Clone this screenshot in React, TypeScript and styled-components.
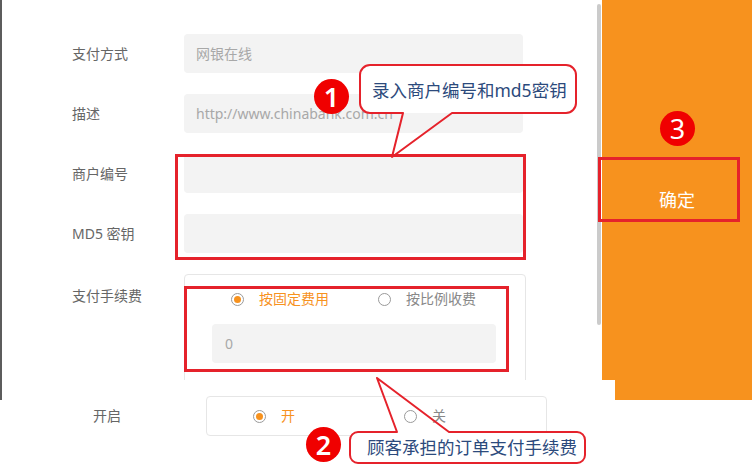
import React from 'react';
import styled, { createGlobalStyle } from 'styled-components';

const colors = {
  orange: '#f7921e',
  red: '#e5222b',
  badge: '#f00000',
  edge: '#5c5c5c',
  label: '#666666',
  placeholder: '#a8a8a8',
  field: '#f3f3f3',
  line: '#e6e6e6',
  radio: '#9a9a9a',
  note: '#2c4a7c',
};

const GlobalStyle = createGlobalStyle`
  html, body { margin: 0; padding: 0; background: #ffffff; }
  body { font-family: "Noto Sans", "Noto Sans CJK SC", sans-serif; }
  * { box-sizing: border-box; }
`;

const Page = styled.div`
  position: relative;
  width: 752px;
  height: 474px;
  overflow: hidden;
  background: #ffffff;
`;

/* ---------- top capture: form + orange side ---------- */
const TopSection = styled.div`
  display: flex;
  height: 380px;
  overflow: hidden;
`;
const FormPanel = styled.div`
  width: 597px;
  border-left: 2px solid ${ colors.edge };
  padding: 34px 0 0 70px;
  display: grid;
  grid-template-columns: 112px 342px;
  grid-auto-rows: min-content;
  row-gap: 21px;
  align-items: center;
`;
const Label = styled.div<{ $top?: boolean }>`
  font-size: 14px;
  line-height: 20px;
  color: ${ colors.label };
  ${ ( p ) => p.$top && 'align-self: start; margin-top: 12px;' }
`;
const Field = styled.div<{ $width?: number }>`
  width: ${ ( p ) => p.$width ?? 339 }px;
  height: 39px;
  padding: 0 12px;
  border-radius: 4px;
  background: ${ colors.field };
  font-size: 14px;
  line-height: 39px;
  color: ${ colors.placeholder };
  white-space: nowrap;
  overflow: hidden;
`;
const FeeBox = styled.div`
  width: 342px;
  height: 130px;
  align-self: start;
  border: 1px solid ${ colors.line };
  border-radius: 4px;
  padding-top: 14px;
`;
const RadioRow = styled.div<{ $indent: number }>`
  display: flex;
  align-items: center;
  height: 20px;
  padding-left: ${ ( p ) => p.$indent }px;
`;
const Option = styled.label`
  display: flex;
  align-items: center;
  gap: 15px;
  width: 151px;
`;
const Radio = styled.span<{ $checked?: boolean }>`
  position: relative;
  width: 13px;
  height: 13px;
  flex: none;
  border: 1px solid ${ colors.radio };
  border-radius: 50%;
  background: #fff;
  &::after {
    content: '';
    display: ${ ( p ) => ( p.$checked ? 'block' : 'none' ) };
    position: absolute;
    left: 2px;
    top: 2px;
    width: 7px;
    height: 7px;
    border-radius: 50%;
    background: ${ colors.orange };
  }
`;
const OptionText = styled.span<{ $checked?: boolean }>`
  font-size: 14px;
  line-height: 20px;
  color: ${ ( p ) => ( p.$checked ? colors.orange : '#888888' ) };
`;
const FeeField = styled( Field )`
  margin: 15px 0 0 27px;
  padding-left: 13px;
`;
const ScrollTrack = styled.div`
  width: 5px;
  padding-top: 4px;
`;
const ScrollThumb = styled.div`
  width: 4px;
  height: 321px;
  border-radius: 2px;
  background: #cbcbcb;
`;
const OrangePanel = styled.div`
  flex: 1;
  background: ${ colors.orange };
  display: flex;
  justify-content: center;
`;
const ConfirmButton = styled.button`
  margin-top: 188px;
  height: 24px;
  padding: 0;
  border: none;
  background: transparent;
  color: #ffffff;
  font-family: inherit;
  font-size: 18px;
  line-height: 24px;
`;

/* ---------- bottom capture: 开启 row ---------- */
const BottomSection = styled.div`
  display: flex;
  height: 94px;
`;
const EdgeStub = styled.div`
  width: 2px;
  height: 20px;
  background: ${ colors.edge };
`;
const SwitchArea = styled.div`
  flex: 1;
  display: flex;
  align-items: center;
  align-self: flex-start;
  padding: 16px 0 0 91px;
`;
const SwitchLabel = styled( Label )`
  width: 113px;
`;
const SwitchBox = styled.div`
  width: 341px;
  height: 40px;
  border: 1px solid ${ colors.line };
  border-radius: 4px;
  display: flex;
  align-items: center;
`;
const OrangeStub = styled.div`
  width: 137px;
  height: 20px;
  background: ${ colors.orange };
`;

/* ---------- annotations laid over the captures ---------- */
const Frame = styled.div<{ $x: number; $y: number; $w: number; $h: number }>`
  position: absolute;
  left: ${ ( p ) => p.$x }px;
  top: ${ ( p ) => p.$y }px;
  width: ${ ( p ) => p.$w }px;
  height: ${ ( p ) => p.$h }px;
  border: 3px solid ${ colors.red };
`;
const Badge = styled.div<{ $x: number; $y: number; $bold?: boolean }>`
  position: absolute;
  left: ${ ( p ) => p.$x }px;
  top: ${ ( p ) => p.$y }px;
  width: 35px;
  height: 35px;
  border-radius: 50%;
  background: ${ colors.badge };
  color: #ffffff;
  font-family: "Noto Sans", sans-serif;
  font-size: 27px;
  font-weight: ${ ( p ) => ( p.$bold ? 600 : 400 ) };
  line-height: 35px;
  text-align: center;
`;
const Callout = styled.div<{ $x: number; $y: number; $w: number; $h: number }>`
  position: absolute;
  left: ${ ( p ) => p.$x }px;
  top: ${ ( p ) => p.$y }px;
  width: ${ ( p ) => p.$w }px;
  height: ${ ( p ) => p.$h }px;
  svg {
    position: absolute;
    inset: 0;
  }
`;
const NoteText = styled.div<{ $x: number; $y: number }>`
  position: relative;
  padding: ${ ( p ) => `${ p.$y }px 0 0 ${ p.$x }px` };
  font-size: 17.5px;
  line-height: 24px;
  color: ${ colors.note };
  white-space: nowrap;
`;

export default function App() {
  return (
    <Page>
      <GlobalStyle />
      <TopSection>
        <FormPanel>
          <Label>支付方式</Label>
          <Field>网银在线</Field>
          <Label>描述</Label>
          <Field>http://www.chinabank.com.cn</Field>
          <Label>商户编号</Label>
          <Field />
          <Label>MD5 密钥</Label>
          <Field />
          <Label $top>支付手续费</Label>
          <FeeBox>
            <RadioRow $indent={ 46 }>
              <Option>
                <Radio $checked />
                <OptionText $checked>按固定费用</OptionText>
              </Option>
              <Option>
                <Radio />
                <OptionText>按比例收费</OptionText>
              </Option>
            </RadioRow>
            <FeeField $width={ 284 }>0</FeeField>
          </FeeBox>
        </FormPanel>
        <ScrollTrack>
          <ScrollThumb />
        </ScrollTrack>
        <OrangePanel>
          <ConfirmButton>确定</ConfirmButton>
        </OrangePanel>
      </TopSection>

      <BottomSection>
        <EdgeStub />
        <SwitchArea>
          <SwitchLabel>开启</SwitchLabel>
          <SwitchBox>
            <RadioRow $indent={ 46 }>
              <Option>
                <Radio $checked />
                <OptionText $checked>开</OptionText>
              </Option>
              <Option>
                <Radio />
                <OptionText>关</OptionText>
              </Option>
            </RadioRow>
          </SwitchBox>
        </SwitchArea>
        <OrangeStub />
      </BottomSection>

      <Frame $x={ 175 } $y={ 154 } $w={ 351 } $h={ 106 } />
      <Frame $x={ 184 } $y={ 286 } $w={ 325 } $h={ 86 } />
      <Frame $x={ 598 } $y={ 157 } $w={ 142 } $h={ 65 } />

      <Callout $x={ 358 } $y={ 63 } $w={ 221 } $h={ 96 }>
        <svg width="221" height="96" viewBox="0 0 221 96">
          <rect x="2" y="2" width="216" height="48" rx="10" fill="#ffffff" />
          <path
            d="M12,2 H208 A10,10 0 0 1 218,12 V40 A10,10 0 0 1 208,50 H94 L34,94 L45,50 H12 A10,10 0 0 1 2,40 V12 A10,10 0 0 1 12,2 Z"
            fill="none"
            stroke={ colors.red }
            strokeWidth="2"
            strokeLinejoin="round"
          />
        </svg>
        <NoteText $x={ 14 } $y={ 15 }>录入商户编号和md5密钥</NoteText>
      </Callout>

      <Callout $x={ 348 } $y={ 376 } $w={ 239 } $h={ 90 }>
        <svg width="239" height="90" viewBox="0 0 239 90">
          <rect x="2" y="56" width="235" height="31" rx="8" fill="#ffffff" />
          <path
            d="M10,56 H49 L29,2 L101,56 H229 A8,8 0 0 1 237,64 V79 A8,8 0 0 1 229,87 H10 A8,8 0 0 1 2,79 V64 A8,8 0 0 1 10,56 Z"
            fill="none"
            stroke={ colors.red }
            strokeWidth="2"
            strokeLinejoin="round"
          />
        </svg>
        <NoteText $x={ 19 } $y={ 59 }>顾客承担的订单支付手续费</NoteText>
      </Callout>

      <Badge $x={ 314 } $y={ 79 } $bold>1</Badge>
      <Badge $x={ 306 } $y={ 427 } $bold>2</Badge>
      <Badge $x={ 660 } $y={ 111 }>3</Badge>
    </Page>
  );
}
